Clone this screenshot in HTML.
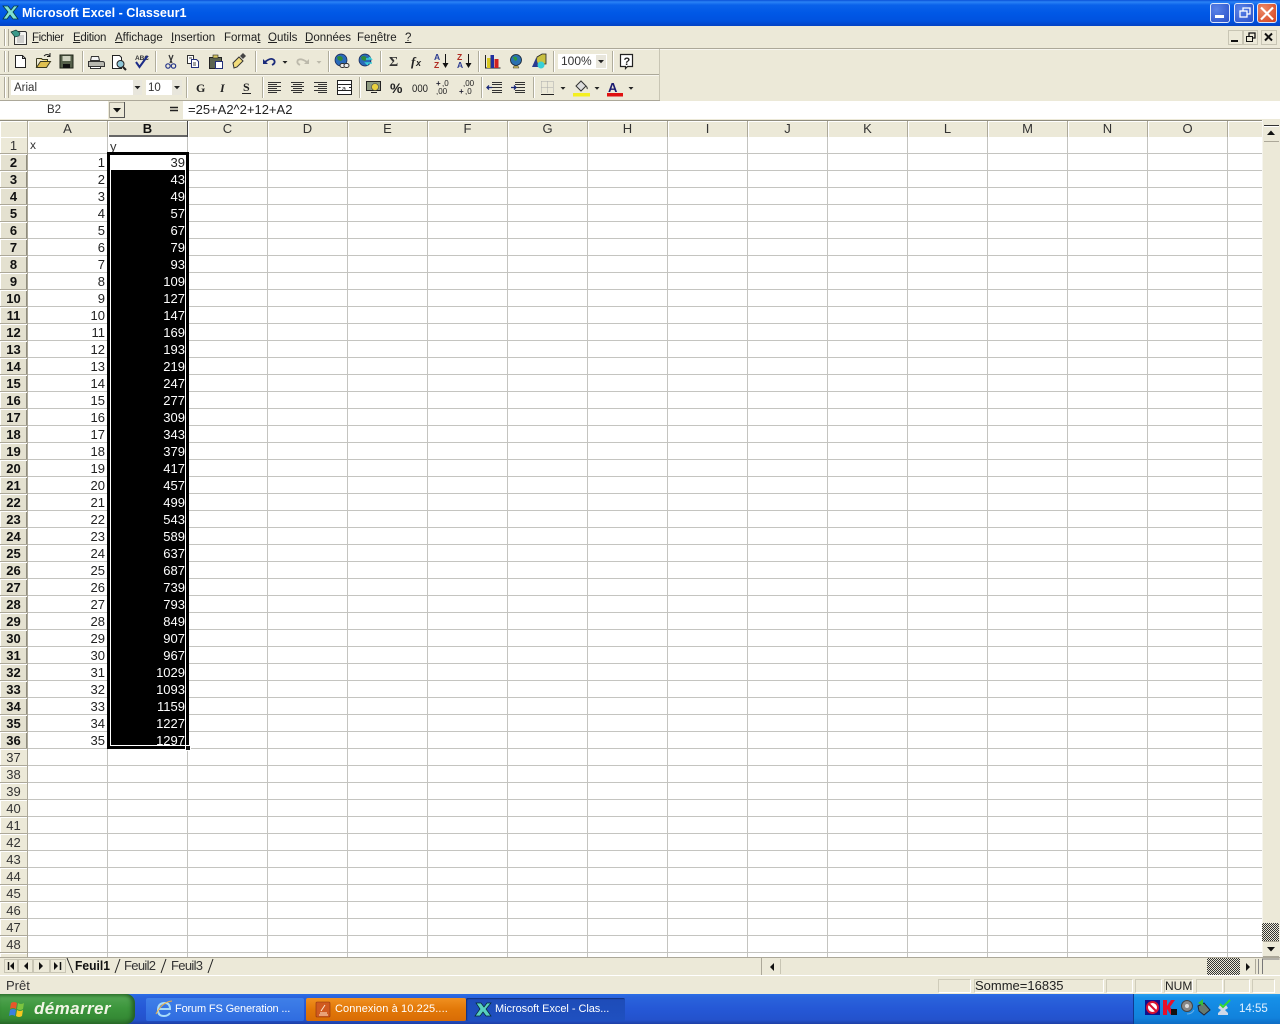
<!DOCTYPE html>
<html lang="fr"><head><meta charset="utf-8"><title>Microsoft Excel - Classeur1</title>
<style>
html,body{margin:0;padding:0;width:1280px;height:1024px;overflow:hidden;background:#ece9d8;font-family:"Liberation Sans",Arial,sans-serif;font-size:13px;color:#111}
div,span{position:absolute;box-sizing:border-box;white-space:nowrap}
.col div,.col span,#rows div{position:static}
#title{left:0;top:0;width:1280px;height:26px;background:linear-gradient(#0a50d8 0,#2a82f5 2px,#0a62ea 5px,#0058e6 13px,#0052df 21px,#0342c4 26px)}
#title b{position:absolute;left:22px;top:6px;color:#fff;font-size:12.6px}
.wb{top:3px;width:20px;height:20px;border:1px solid #dfe8fb;border-radius:3px;background:radial-gradient(circle at 30% 30%,#5a83e8,#2a50c8)}
#wx{background:radial-gradient(circle at 30% 30%,#ec8a68,#d2401c)}
svg{position:absolute;left:0;top:0;overflow:visible}
svg text{font-family:"Liberation Sans",Arial,sans-serif}
.m{top:32px;font-size:11.5px;color:#222}
.m u{text-decoration:underline}
#namebox{left:0;top:101px;width:108px;height:18px;background:#fff;text-align:center;line-height:19px;font-size:11.5px;color:#333}
#fbar{left:183px;top:101px;width:1097px;height:18px;background:#fff;line-height:17px;padding-left:5px;font-size:13px;color:#222}
#hdr{left:0;top:120px;width:1262px;height:17px;background:#ece9d8;border-top:1px solid #8f8c7e}
.h{top:0;width:80px;height:16px;text-align:center;line-height:16px;font-size:13px;color:#333;border-right:1px solid #aca899;box-shadow:inset 1px 1px 0 #fff}
#grid{left:28px;top:137px;width:1234px;height:820px;background-color:#fff;background-image:linear-gradient(to bottom,transparent 16px,#c4c4c0 16px),linear-gradient(to right,transparent 79px,#c4c4c0 79px);background-size:100% 17px,80px 100%}
#rows{left:0;top:137px;width:28px;height:820px;overflow:hidden;background:#ece9d8;text-align:center;border-right:1px solid #aca899}
#rows div{height:17px;line-height:18px;border-bottom:1px solid #aca899;box-shadow:inset 1px 1px 0 #fff;color:#333}
#rows .s{font-weight:bold;color:#111;background:#e4e1d0;box-shadow:inset 1px 1px 0 #fff,inset -1px 0 0 #8f8c7e}
.cA{left:28px;top:154px;width:77px;text-align:right;line-height:17px;color:#222}
.cB{left:108px;top:171px;width:77px;text-align:right;line-height:17px;color:#fff}
#tabs{left:0;top:957px;width:1280px;height:18px;background:#ece9d8;border-top:1px solid #aca899}
#status{left:0;top:975px;width:1280px;height:19px;background:#ece9d8;border-top:1px solid #fff;color:#333}
.p{top:3px;height:14px;border:1px solid;border-color:#cfccba #fff #fff #cfccba}
#task{left:0;top:994px;width:1280px;height:30px;background:linear-gradient(#2a6ee8 0,#2a63dc 3px,#2558d6 15px,#2452cc 26px,#1d3fa5 30px)}
#start{left:0;top:0;width:135px;height:30px;border-radius:0 9px 9px 0;background:linear-gradient(#3a8a3a 0,#4fa24f 4px,#3c963c 14px,#358a35 24px,#2c722c 30px);box-shadow:inset -3px 0 4px #245e24}
#start i{position:absolute;left:34px;top:5px;font:italic bold 17px "Liberation Sans",Arial,sans-serif;color:#f2f5e6;letter-spacing:.4px}
.b{top:4px;height:23px;border-radius:2px;color:#fff;font-size:11px;letter-spacing:.1px;line-height:23px;padding-left:29px}
#tray{left:1133px;top:0;width:147px;height:30px;background:linear-gradient(#2aa0f0 0,#1690e8 4px,#1182dc 24px,#0f6cc4 30px);border-left:1px solid #103a90;color:#e4f2ff;font-size:11.5px}
</style></head><body>

<div id="title"><b>Microsoft Excel - Classeur1</b>
<svg width="1280" height="26"><path d="M3 6h5l3 4 3-4h4l-5 6 5 7h-5l-3-4-3 4H3l5-7z" fill="#7fe0d0" stroke="#0a3a40" stroke-width=".8"/></svg>
<div class="wb" style="left:1210px"></div><div class="wb" style="left:1234px"></div><div class="wb" id="wx" style="left:1257px"></div>
<svg width="1280" height="26"><rect x="1215" y="15" width="9" height="3" fill="#fff"/><rect x="1240" y="11" width="7" height="6" fill="none" stroke="#fff" stroke-width="1.300"/><path d="M1243 11V8h7v6h-3" fill="none" stroke="#fff" stroke-width="1.300"/><path d="M1261 7.500l12 12M1273 7.500l-12 12" stroke="#fff" stroke-width="2.200"/></svg>
</div>

<svg width="1280" height="120" style="top:0">
<path d="M0 48.500H1280M0 74.500H660M0 100.500H660" stroke="#aca899"/><path d="M0 49.500H1280M0 75.500H660" stroke="#fff" opacity=".6"/>
<path d="M659.500 49V100" stroke="#c8c5b4"/>
<path d="M4.500 29V46M8.500 29V46M4.500 51V72M8.500 51V72M4.500 77V98M8.500 77V98" stroke="#aca899"/>
<path d="M5.500 29V46M5.500 51V72M5.500 77V98" stroke="#fff"/>
<path d="M82.500 51V72M155.500 51V72M255.500 51V72M328.500 51V72M380.500 51V72M478.500 51V72M553.500 51V72M612.500 51V72M186.500 77V98M262.500 77V98M359.500 77V98M481.500 77V98M533.500 77V98" stroke="#b0ad9c"/>
<path d="M83.500 51V72M156.500 51V72M256.500 51V72M329.500 51V72M381.500 51V72M479.500 51V72M554.500 51V72M613.500 51V72M187.500 77V98M263.500 77V98M360.500 77V98M482.500 77V98M534.500 77V98" stroke="#fff"/>

<path d="M14.500 31.500h11l1 1v12h-12z" fill="#f4f4f0" stroke="#333"/><path d="M17 36h7M17 38h7M17 40h7M17 42h7" stroke="#a8a8a8"/><path d="M11 32l5-2 4 3-1 3-4 1z" fill="#3a9a8a" stroke="#163a36" stroke-width=".7"/>

<path d="M15.500 55.500h7l3 3v9h-10z" fill="#fff" stroke="#222"/><path d="M22.500 55.500v3h3" fill="none" stroke="#222"/>
<path d="M36.500 58.500h5l1 1h5v2" fill="#f6d860" stroke="#3a3a20"/><path d="M36.500 67.500v-9M36.500 67.500h10l4-6h-10l-4 6z" fill="#e0c050" stroke="#3a3a20"/><path d="M44 56q3-3 6 0M50 53v3.500h-3" fill="none" stroke="#1a1a1a"/>
<rect x="60" y="55" width="13" height="13" fill="#55604a" stroke="#1e2418"/><rect x="62.500" y="56" width="8" height="5" fill="#cfd2c0"/><rect x="63" y="64" width="7" height="4" fill="#111"/>
<path d="M91.500 56.500h7l1 4h-9z" fill="#f4f4f4" stroke="#333"/><path d="M88.500 61.500h14q2 0 2 2v3h-16z" fill="#b8b8b0" stroke="#333"/><path d="M90.500 66.500h10v2h-10z" fill="#fff" stroke="#333"/>
<path d="M112.500 55.500h7l2 2v11h-9z" fill="#fff" stroke="#222"/><circle cx="120.500" cy="64" r="3.500" fill="#8ec6d8" stroke="#222"/><path d="M123 67l3 3" stroke="#222" stroke-width="2"/>
<text x="135" y="60" font-size="6.500" font-weight="bold" fill="#333" letter-spacing="-.1">ABC</text><path d="M136 62l3.500 5 8-11" fill="none" stroke="#1c2c88" stroke-width="2"/>
<path d="M169 55l3 8M173 55l-3 8" stroke="#333" stroke-width="1.200"/><circle cx="168" cy="66" r="2.200" fill="none" stroke="#223388" stroke-width="1.200"/><circle cx="173.500" cy="66" r="2.200" fill="none" stroke="#223388" stroke-width="1.200"/>
<path d="M187.500 55.500h6v8h-6z" fill="#fff" stroke="#333"/><path d="M191.500 59.500h5l2 2v6h-7z" fill="#fff" stroke="#23307a"/><path d="M189 58h3M193 63h3M193 65h3" stroke="#444"/>
<rect x="209.500" y="57.500" width="12" height="11" fill="#5c6450" stroke="#222"/><rect x="213" y="55" width="5" height="3" fill="#d8c860" stroke="#222" stroke-width=".6"/><path d="M215.500 61.500h7v7h-7z" fill="#fff" stroke="#23307a"/>
<path d="M233 63l6-6 4 4-6 6-3 1z" fill="#f2dc7a" stroke="#333"/><path d="M240 56l3-3 3 3-3 3z" fill="#444"/>
<path d="M265 62q6-5 9-2 2 3-2 5" fill="none" stroke="#1a2a7a" stroke-width="1.800"/><path d="M263 59v5h5z" fill="#1a2a7a"/>
<path d="M282.500 61h5l-2.500 2.700z" fill="#222"/>
<path d="M307 62q-6-4-9-2-2 3 2 5" fill="none" stroke="#bcb9ab" stroke-width="1.800"/><path d="M309 59v5h-5z" fill="#bcb9ab"/><path d="M316.500 61h5l-2.500 2.700z" fill="#bcb9ab"/>
<circle cx="341" cy="60" r="6" fill="#2a6ab8" stroke="#132050" stroke-width=".7"/><path d="M337 57q3-2 5 0t-1 4l-3-1z" fill="#2f8a3a"/><rect x="340" y="63.500" width="5" height="4" rx="2" fill="#eee" stroke="#333"/><rect x="344" y="63.500" width="5" height="4" rx="2" fill="#eee" stroke="#333"/>
<circle cx="365" cy="60" r="6" fill="#2a6ab8" stroke="#132050" stroke-width=".7"/><path d="M361 57q3-2 5 0t-1 4l-3-1z" fill="#2f8a3a"/><path d="M366 59h5l-2-2M372 63h-6l2 2" fill="none" stroke="#38d0d8" stroke-width="1.500"/>
<text x="389" y="66" font-size="14" font-weight="bold" fill="#333" style="font-family:'Liberation Serif'">&#931;</text>
<text x="411" y="66" font-size="13" font-weight="bold" font-style="italic" fill="#222" style="font-family:'Liberation Serif'">f</text><text x="416" y="66" font-size="9" font-weight="bold" font-style="italic" fill="#222">x</text>
<text x="434" y="60" font-size="8.500" font-weight="bold" fill="#2a3a90">A</text><text x="434" y="68" font-size="8.500" font-weight="bold" fill="#b02a20">Z</text><path d="M445.500 54v12" stroke="#111"/><path d="M442.500 63h6l-3 5z" fill="#111"/>
<text x="457" y="60" font-size="8.500" font-weight="bold" fill="#b02a20">Z</text><text x="457" y="68" font-size="8.500" font-weight="bold" fill="#2a3a90">A</text><path d="M468.500 54v12" stroke="#111"/><path d="M465.500 63h6l-3 5z" fill="#111"/>
<path d="M485.500 55v13h15" fill="none" stroke="#222"/><rect x="487" y="58" width="3.500" height="10" fill="#d8c820"/><rect x="490.500" y="55" width="3.500" height="13" fill="#2030a0"/><rect x="494.500" y="59" width="4" height="9" fill="#d02020"/>
<circle cx="516" cy="60" r="5.500" fill="#2a70b0" stroke="#152030" stroke-width=".8"/><path d="M513 57q3-1 4 1t-2 3z" fill="#2f9a3a"/><path d="M514 66h4l1 2h-6z" fill="#d8c860" stroke="#333" stroke-width=".5"/>
<path d="M537 57l5-3h4v10h-6l-5 2z" fill="#c8c040" stroke="#222" stroke-width=".8"/><path d="M532 67l4-9 3 9z" fill="#2a3a90"/><circle cx="541" cy="65" r="3.500" fill="#38d0d8"/>
<rect x="558" y="54" width="49" height="15" fill="#fff"/><rect x="596" y="55" width="10" height="13" fill="#e8e6dc"/><text x="561" y="65" font-size="12" fill="#333">100%</text><path d="M598 60h6l-3 3.300z" fill="#222"/>
<path d="M620.500 54.500h12v12h-5l-2 2v-2h-5z" fill="#fff" stroke="#222" stroke-width="1.200"/><text x="623.500" y="65" font-size="11" font-weight="bold" fill="#222">?</text>

<rect x="11" y="80" width="131" height="15" fill="#fff"/><rect x="133" y="80" width="9" height="15" fill="#e8e6dc"/><text x="14" y="91" font-size="11.500" fill="#333">Arial</text><path d="M134.500 86h6l-3 3.300z" fill="#222"/>
<rect x="146" y="80" width="36" height="15" fill="#fff"/><rect x="172" y="80" width="10" height="15" fill="#e8e6dc"/><text x="148" y="91" font-size="11.500" fill="#333">10</text><path d="M174 86h6l-3 3.300z" fill="#222"/>
<text x="196" y="92" font-size="12" font-weight="bold" fill="#222" style="font-family:'Liberation Serif'">G</text>
<text x="220" y="92" font-size="12" font-weight="bold" font-style="italic" fill="#222" style="font-family:'Liberation Serif'">I</text>
<text x="243" y="91" font-size="12" font-weight="bold" fill="#222" style="font-family:'Liberation Serif'">S</text><path d="M242 93.500h9" stroke="#222"/>
<path d="M268 82.500h13M268 84.500h9M268 86.500h13M268 88.500h9M268 90.500h13M268 92.500h9" stroke="#333"/>
<path d="M291 82.500h13M293 84.500h9M291 86.500h13M293 88.500h9M291 90.500h13M293 92.500h9" stroke="#333"/>
<path d="M314 82.500h13M318 84.500h9M314 86.500h13M318 88.500h9M314 90.500h13M318 92.500h9" stroke="#333"/>
<rect x="337.500" y="80.500" width="14" height="14" fill="#fff" stroke="#222"/><path d="M338 84.500h13M338 90.500h13" stroke="#222"/><text x="342" y="91" font-size="7" fill="#222">a</text><path d="M338.500 87.500h2M349 87.500h2" stroke="#222"/>
<rect x="366.500" y="81.500" width="14" height="9" fill="#8e9a80" stroke="#222"/><path d="M371 92.500h6" stroke="#222"/><circle cx="375" cy="87" r="3.500" fill="#e8d040" stroke="#444" stroke-width=".6"/>
<text x="390" y="93" font-size="14" font-weight="bold" fill="#222">%</text>
<text x="412" y="92" font-size="11" fill="#222" textLength="16" lengthAdjust="spacingAndGlyphs">000</text>
<text x="436" y="86" font-size="8" font-weight="bold" fill="#223">+</text><text x="442" y="86" font-size="8" fill="#222">,0</text><text x="436" y="94" font-size="8" fill="#222">,00</text>
<text x="459" y="94" font-size="8" font-weight="bold" fill="#223">+</text><text x="463" y="86" font-size="8" fill="#222">,00</text><text x="465" y="94" font-size="8" fill="#222">,0</text>
<path d="M492 82.500h10M492 84.500h10M492 87.500h10M492 90.500h10M492 92.500h10" stroke="#333"/><path d="M487 87.500h5M489 85.500l-2 2 2 2" fill="none" stroke="#1a2a7a" stroke-width="1.300"/>
<path d="M515 82.500h10M515 84.500h10M515 87.500h10M515 90.500h10M515 92.500h10" stroke="#333"/><path d="M511 87.500h5M514 85.500l2 2-2 2" fill="none" stroke="#1a2a7a" stroke-width="1.300"/>
<path d="M541.500 81.500h12v12" fill="none" stroke="#aaa" stroke-dasharray="1 1"/><path d="M541.500 81.500v12M547.500 81.500v12M541.500 87.500h12" fill="none" stroke="#aaa" stroke-dasharray="1 1"/><path d="M541 94.500h13" stroke="#222"/><path d="M560.500 87h5l-2.500 2.700z" fill="#222"/>
<path d="M576 86l5-5 5 5-5 5z" fill="#ddd" stroke="#333"/><path d="M586 86q2 2 1 3" stroke="#444"/><rect x="573" y="93" width="17" height="3.500" fill="#f4ef20"/><path d="M594.500 87h5l-2.500 2.700z" fill="#222"/>
<text x="608" y="92" font-size="13" font-weight="bold" fill="#1a1a70">A</text><rect x="607" y="93" width="16" height="3.500" fill="#e01010"/><path d="M628.500 87h5l-2.500 2.700z" fill="#222"/>

<g fill="#ece9d8" stroke="#c8c5b4"><rect x="1228.500" y="30.500" width="14" height="14"/><rect x="1243.500" y="30.500" width="14" height="14"/><rect x="1261.500" y="30.500" width="15" height="14"/></g>
<path d="M1231 41h7" stroke="#111" stroke-width="2"/><rect x="1246.500" y="36.500" width="6" height="5" fill="none" stroke="#111"/><path d="M1249 36v-3h6v5h-2" fill="none" stroke="#111" stroke-width="1.300"/><path d="M1265 33.500l7 7M1272 33.500l-7 7" stroke="#111" stroke-width="2"/>
</svg>

<span class="m" style="left:32px;letter-spacing:-.4px"><u>F</u>ichier</span>
<span class="m" style="left:73px;letter-spacing:-.3px"><u>E</u>dition</span>
<span class="m" style="left:115px"><u>A</u>ffichage</span>
<span class="m" style="left:171px"><u>I</u>nsertion</span>
<span class="m" style="left:224px">Forma<u>t</u></span>
<span class="m" style="left:268px"><u>O</u>utils</span>
<span class="m" style="left:305px"><u>D</u>onnées</span>
<span class="m" style="left:357px">Fe<u>n</u>être</span>
<span class="m" style="left:405px"><u>?</u></span>

<div id="namebox">B2</div>
<div id="fbar">=25+A2^2+12+A2</div>
<svg width="190" height="120"><rect x="109.500" y="102.500" width="15" height="15" fill="#ece9d8" stroke="#aca899"/><path d="M110 117.500h15M124.500 102v16" stroke="#555"/><path d="M113 108h8l-4 4.500z" fill="#111"/><path d="M170 107.500h8M170 110.500h8" stroke="#222" stroke-width="1.600"/></svg>

<div id="hdr">
<div class="h" style="left:0;width:28px"></div>
<div class="h" style="left:28px">A</div>
<div class="h" style="left:108px;background:#e4e1d0;font-weight:bold;color:#111;border-right:1px solid #444;box-shadow:inset 1px 1px 0 #fff,inset 0 -2px 0 #666">B</div>
<div class="h" style="left:188px">C</div><div class="h" style="left:268px">D</div><div class="h" style="left:348px">E</div><div class="h" style="left:428px">F</div><div class="h" style="left:508px">G</div><div class="h" style="left:588px">H</div><div class="h" style="left:668px">I</div><div class="h" style="left:748px">J</div><div class="h" style="left:828px">K</div><div class="h" style="left:908px">L</div><div class="h" style="left:988px">M</div><div class="h" style="left:1068px">N</div><div class="h" style="left:1148px">O</div>
<div class="h" style="left:1228px;width:34px;border-right:0"></div>
</div>

<div id="grid"></div>

<div id="rows">
<div>1</div><div class="s">2</div><div class="s">3</div><div class="s">4</div><div class="s">5</div><div class="s">6</div><div class="s">7</div><div class="s">8</div><div class="s">9</div><div class="s">10</div><div class="s">11</div><div class="s">12</div><div class="s">13</div><div class="s">14</div><div class="s">15</div><div class="s">16</div><div class="s">17</div><div class="s">18</div><div class="s">19</div><div class="s">20</div><div class="s">21</div><div class="s">22</div><div class="s">23</div><div class="s">24</div><div class="s">25</div><div class="s">26</div><div class="s">27</div><div class="s">28</div><div class="s">29</div><div class="s">30</div><div class="s">31</div><div class="s">32</div><div class="s">33</div><div class="s">34</div><div class="s">35</div><div class="s">36</div><div>37</div><div>38</div><div>39</div><div>40</div><div>41</div><div>42</div><div>43</div><div>44</div><div>45</div><div>46</div><div>47</div><div>48</div><div>49</div>
</div>

<span style="left:30px;top:138px;font-size:12px;color:#333">x</span>
<span style="left:110px;top:139px;font-size:13px;color:#333">y</span>

<div class="cA col"><div>1</div><div>2</div><div>3</div><div>4</div><div>5</div><div>6</div><div>7</div><div>8</div><div>9</div><div>10</div><div>11</div><div>12</div><div>13</div><div>14</div><div>15</div><div>16</div><div>17</div><div>18</div><div>19</div><div>20</div><div>21</div><div>22</div><div>23</div><div>24</div><div>25</div><div>26</div><div>27</div><div>28</div><div>29</div><div>30</div><div>31</div><div>32</div><div>33</div><div>34</div><div>35</div></div>

<div style="left:107px;top:152px;width:82px;height:597px;background:#000"></div>
<div style="left:110px;top:155px;width:76px;height:15px;background:#fff"></div>
<div style="left:110px;top:170px;width:76px;height:576px;border:1px solid #fff;border-top:0;background:#000"></div>
<div style="left:185px;top:745px;width:6px;height:6px;background:#111;border:1px solid #fff"></div>
<span style="left:108px;top:154px;width:77px;text-align:right;line-height:17px;color:#222">39</span>
<div class="cB col"><div>43</div><div>49</div><div>57</div><div>67</div><div>79</div><div>93</div><div>109</div><div>127</div><div>147</div><div>169</div><div>193</div><div>219</div><div>247</div><div>277</div><div>309</div><div>343</div><div>379</div><div>417</div><div>457</div><div>499</div><div>543</div><div>589</div><div>637</div><div>687</div><div>739</div><div>793</div><div>849</div><div>907</div><div>967</div><div>1029</div><div>1093</div><div>1159</div><div>1227</div><div>1297</div></div>

<div style="left:1262px;top:120px;width:18px;height:837px;background:#ece9d8;border-left:1px solid #f6f5ee"></div>
<div style="left:1264px;top:125px;width:15px;height:17px;background:#ece9d8;border-top:1px solid #333;border-bottom:1px solid #aca899;box-shadow:inset 0 1px 0 #fff"></div>
<svg width="1280" height="1024" style="pointer-events:none">
<defs><pattern id="d" width="2" height="2" patternUnits="userSpaceOnUse"><rect width="2" height="2" fill="#ece9d8"/><rect width="1" height="1" fill="#333"/><rect x="1" y="1" width="1" height="1" fill="#333"/></pattern></defs>
<path d="M1267 135h8l-4-4.500z" fill="#111"/>
<rect x="1262" y="923" width="17" height="18" fill="url(#d)"/>
<path d="M1267 947h8l-4 4.500z" fill="#111"/><path d="M1263 956.500h16M1263 941.500h16" stroke="#aca899"/>
</svg>

<div id="tabs">
<svg width="1280" height="18">
<g fill="none" stroke="#c8c5b4"><rect x="4.500" y="1.500" width="13" height="13"/><rect x="18.500" y="1.500" width="14" height="13"/><rect x="33.500" y="1.500" width="16" height="13"/><rect x="50.500" y="1.500" width="15" height="13"/></g>
<path d="M8.500 4v8" stroke="#111" stroke-width="1.500"/><path d="M14 4v8l-4-4zM28 4v8l-4-4zM39 4v8l4-4zM54 4v8l4-4z" fill="#111"/><path d="M60.500 4v8" stroke="#111" stroke-width="1.500"/>
<path d="M67 0l6 15M115 15l5-14M161 15l5-14M208 15l5-14" fill="none" stroke="#222"/>
<text x="75" y="12" font-size="13" font-weight="bold" fill="#111" textLength="35" lengthAdjust="spacingAndGlyphs">Feuil1</text>
<text x="124" y="12" font-size="13" fill="#333" textLength="32">Feuil2</text>
<text x="171" y="12" font-size="13" fill="#333" textLength="32">Feuil3</text>
<path d="M761.500 0v17" stroke="#aca899"/>
<path d="M774 5v8l-4-4z" fill="#111"/><path d="M780.500 1v15" stroke="#c8c5b4"/>
<rect x="1207" y="0" width="33" height="17" fill="url(#d)"/>
<path d="M1246 5v8l4-4z" fill="#111"/><path d="M1255.500 1v15" stroke="#aca899"/>
<path d="M1258.500 1v15" stroke="#888"/><path d="M1262.500 16v-15h17" fill="none" stroke="#777"/>
</svg>
</div>

<div id="status">
<span style="left:6px;top:2px;color:#333">Prêt</span>
<div class="p" style="left:938px;width:33px"></div>
<div class="p" style="left:974px;width:130px;line-height:12px;font-size:13px;color:#222">Somme=16835</div>
<div class="p" style="left:1106px;width:27px"></div>
<div class="p" style="left:1135px;width:27px"></div>
<div class="p" style="left:1164px;width:29px;line-height:12px;font-size:12px;color:#222">NUM</div>
<div class="p" style="left:1196px;width:27px"></div>
<div class="p" style="left:1224px;width:26px"></div>
<div class="p" style="left:1252px;width:23px"></div>
</div>

<div id="task">
<div id="start"><i>démarrer</i>
<svg width="40" height="30"><path d="M11 9q3-2 6 0l-1 6q-3-2-6 0z" fill="#e8562a"/><path d="M18 9q3 2 6 0l-1 6q-3 2-6 0z" fill="#7cc440"/><path d="M10 16q3-2 6 0l-1 6q-3-2-6 0z" fill="#3a80e0"/><path d="M17 16q3 2 6 0l-1 6q-3 2-6 0z" fill="#f6c820"/></svg>
</div>
<div class="b" style="left:146px;width:158px;letter-spacing:-.15px;background:linear-gradient(#3f7fe8,#2f6ce0)">Forum FS Generation ...</div>
<div class="b" style="left:306px;width:160px;background:linear-gradient(#f09020,#e27808 50%,#d86c06)">Connexion à 10.225....</div>
<div class="b" style="left:466px;width:159px;letter-spacing:-.05px;background:linear-gradient(#1e4cb8,#1f50c0);box-shadow:inset 1px 1px 1px #12307c">Microsoft Excel - Clas...</div>
<svg width="640" height="30">
<path d="M158 15h12q0-6-5-6-7 0-7 7 0 6 6 6 4 0 6-3" fill="none" stroke="#a8dcfa" stroke-width="2"/><path d="M156 20q6-12 16-13" fill="none" stroke="#f2b040"/>
<rect x="316" y="8" width="14" height="15" rx="1" fill="#d05a20" stroke="#8a3010" stroke-width=".6"/><path d="M320 19h7M319 21h9M325 11l-4 6" stroke="#ffe8d0"/>
<path d="M476 9h5l3 4 3-4h4l-5 6 5 7h-5l-3-4-3 4h-5l5-7z" fill="#58d0c0" stroke="#062a30" stroke-width=".7"/>
</svg>
<div id="tray"><span style="left:105px;top:9px">14:55</span>
<svg width="147" height="30">
<rect x="11" y="6" width="15" height="15" fill="#10108a"/><circle cx="18.500" cy="13.500" r="5.500" fill="#fff" stroke="#d81030" stroke-width="2"/><path d="M14.500 9.500l8 8" stroke="#d81030" stroke-width="2"/>
<path d="M29 6h4v6l4-6h4l-5 7 6 8h-5l-4-6v6h-4z" fill="#e8102a"/><path d="M37 15h6v6h-6z" fill="#111"/>
<circle cx="53" cy="12" r="5.500" fill="#888" stroke="#444"/><circle cx="53" cy="12" r="2" fill="#ddd"/><path d="M53 20q5 0 7-4" fill="none" stroke="#6ab0e8"/>
<path d="M64 12l6-3 6 7-6 5-5-4z" fill="#667a70" stroke="#223"/><path d="M64 9l5-4v7z" fill="#38c038"/>
<path d="M84 14l2-3h6l2 3-3 2 3 3v2H84v-2l3-3z" fill="#cfd8e8"/><path d="M86 10l3 3 7-7" fill="none" stroke="#30d830" stroke-width="2"/>
</svg>
</div>
</div>
</body></html>
